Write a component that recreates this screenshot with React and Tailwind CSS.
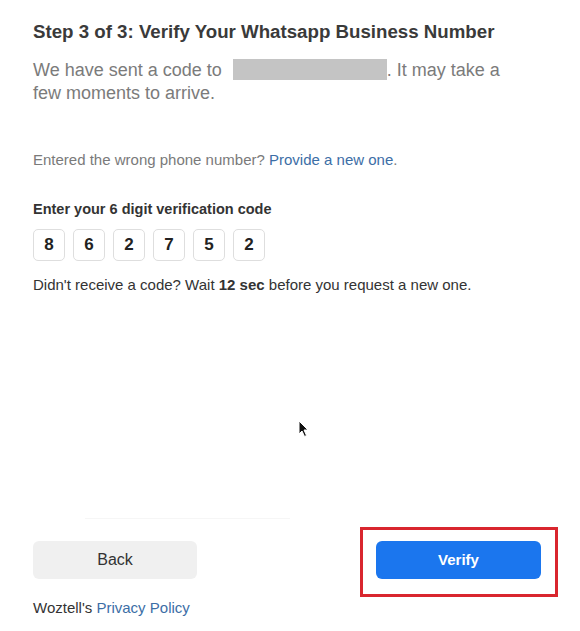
const digits = ["8", "6", "2", "7", "5", "2"];

const App = () => {
  return (
    <div className="relative w-[580px] h-[631px] bg-white font-['Liberation_Sans',Arial,sans-serif] overflow-hidden">
      <div className="flex flex-col pl-[33px] pr-[50px] pt-[20px]">
        <h1 className="text-[18.7px] leading-[24px] font-bold text-[#3a3a3a] whitespace-nowrap">
          Step 3 of 3: Verify Your Whatsapp Business Number
        </h1>
        <p className="mt-[15px] text-[18px] leading-[23px] text-[#7b7b7b]">
          We have sent a code to{" "}
          <span className="inline-block align-middle ml-[6px] w-[154px] h-[21px] bg-[#c4c4c4] -mt-[3px]"></span>
          . It may take a
          <br />
          few moments to arrive.
        </p>

        <p className="mt-[45px] text-[15px] leading-[20px] text-[#7a7a7a]">
          Entered the wrong phone number?{" "}
          <a className="text-[#3c6ea6]">Provide a new one</a>.
        </p>

        <p className="mt-[29px] text-[14.5px] leading-[20px] font-bold text-[#333]">
          Enter your 6 digit verification code
        </p>

        <div className="mt-[10px] flex gap-[8px]">
          {digits.map((d, i) => (
            <div
              key={i}
              className="w-[32px] h-[32px] flex items-center justify-center rounded-[5px] border border-[#dedede] text-[17px] font-bold text-[#222]"
            >
              {d}
            </div>
          ))}
        </div>

        <p className="mt-[14px] text-[15px] leading-[20px] text-[#333]">
          Didn't receive a code? Wait <b>12 sec</b> before you request a new
          one.
        </p>
      </div>

      {/* faint separator */}
      <div className="absolute left-[85px] top-[518px] w-[205px] h-px bg-[#f6f6f6]"></div>

      <div className="absolute left-0 right-0 top-[541px] pl-[33px] pr-[39px] flex justify-between">
        <button className="w-[164px] h-[38px] rounded-[6px] bg-[#f0f0f0] text-[16px] text-[#333]">
          Back
        </button>
        <div className="relative">
          <button className="w-[165px] h-[38px] rounded-[6px] bg-[#1b76ee] text-[15px] font-bold text-white">
            Verify
          </button>
          <span className="absolute left-[-16px] right-[-17px] top-[-14px] bottom-[-18px] border-[3px] border-[#d9262e] pointer-events-none"></span>
        </div>
      </div>

      <p className="absolute left-[33px] top-[598px] text-[15px] leading-[20px] text-[#333]">
        Woztell's <a className="text-[#3c6ea6]">Privacy Policy</a>
      </p>

      {/* mouse cursor */}
      <svg
        className="absolute left-[298px] top-[420px]"
        width="12"
        height="18"
        viewBox="0 0 12 18"
      >
        <path
          d="M1 1 L1 14 L4 11 L6.5 16.5 L8.5 15.5 L6 10 L10 10 Z"
          fill="#111"
          stroke="#fff"
          strokeWidth="1"
        />
      </svg>
    </div>
  );
};

export default App;
